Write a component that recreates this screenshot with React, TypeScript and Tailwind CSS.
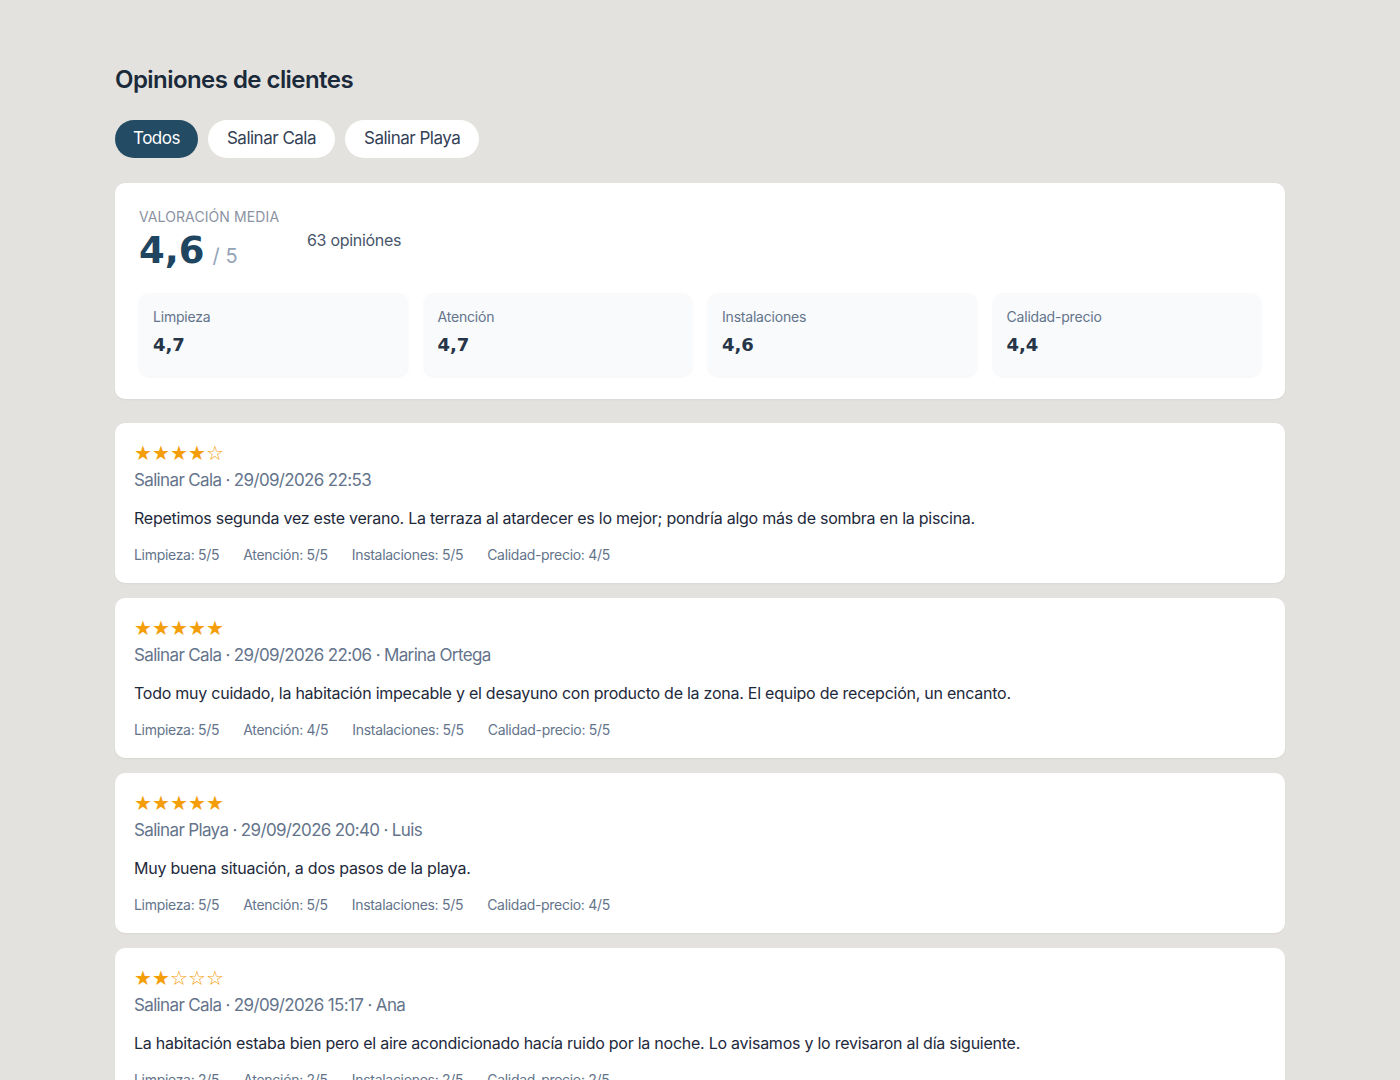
import React from "react";

const reviews = [
  {
    stars: 4,
    meta: "Salinar Cala · 29/09/2026 22:53",
    text: "Repetimos segunda vez este verano. La terraza al atardecer es lo mejor; pondría algo más de sombra en la piscina.",
    scores: [5, 5, 5, 4],
  },
  {
    stars: 5,
    meta: "Salinar Cala · 29/09/2026 22:06 · Marina Ortega",
    text: "Todo muy cuidado, la habitación impecable y el desayuno con producto de la zona. El equipo de recepción, un encanto.",
    scores: [5, 4, 5, 5],
  },
  {
    stars: 5,
    meta: "Salinar Playa · 29/09/2026 20:40 · Luis",
    text: "Muy buena situación, a dos pasos de la playa.",
    scores: [5, 5, 5, 4],
  },
  {
    stars: 2,
    meta: "Salinar Cala · 29/09/2026 15:17 · Ana",
    text: "La habitación estaba bien pero el aire acondicionado hacía ruido por la noche. Lo avisamos y lo revisaron al día siguiente.",
    scores: [2, 2, 2, 2],
  },
];

const categories = [
  { label: "Limpieza", value: "4,7" },
  { label: "Atención", value: "4,7" },
  { label: "Instalaciones", value: "4,6" },
  { label: "Calidad-precio", value: "4,4" },
];

const Stars = ({ n }: { n: number }) => (
  <div className="flex text-[#f59e0b] text-[20px] leading-[20px] font-['DejaVu_Sans',sans-serif]">
    {[0, 1, 2, 3, 4].map((i) => (
      <span key={i} className="w-[18px]">
        {i < n ? "★" : "☆"}
      </span>
    ))}
  </div>
);

const App = () => {
  const [tab, setTab] = React.useState("Todos");

  return (
    <div className="min-h-screen bg-[#e4e2de] font-['Inter',sans-serif] text-[#1e293b]">
      <div className="mx-auto w-[1170px] pt-[62px]">
        <h1 className="text-[24px] font-semibold tracking-[-0.55px] text-[#1b2a3b]">Opiniones de clientes</h1>

        {/* filters */}
        <div className="mt-[22px] flex gap-[10px]">
          {["Todos", "Salinar Cala", "Salinar Playa"].map((t) => (
            <button
              key={t}
              onClick={() => setTab(t)}
              className={
                tab === t
                  ? "h-[38px] rounded-full bg-[#234b64] px-[18px] text-[17px] tracking-[-0.5px] text-white"
                  : "h-[38px] rounded-full bg-white px-[19px] text-[17px] tracking-[-0.5px] text-[#334155]"
              }
            >
              {t}
            </button>
          ))}
        </div>

        {/* summary */}
        <div className="mt-[25px] rounded-[10px] bg-white px-6 pt-[25px] pb-[23px] shadow-[0_1px_2px_rgba(0,0,0,0.05)]">
          <div className="flex items-start">
            <div className="w-[168px]">
              <div className="text-[14px] uppercase leading-[18px] tracking-[0.1px] text-[#8b93a3]">Valoración media</div>
              <div className="flex items-baseline">
                <span className="font-['DejaVu_Sans',sans-serif] text-[37px] font-bold leading-[49px] text-[#1f4560]">4,6</span>
                <span className="ml-[8px] text-[20px] text-[#94a3b8]">/ 5</span>
              </div>
            </div>
            <div className="mt-[20px] text-[16px] tracking-[-0.3px] text-[#475569]">63 opiniónes</div>
          </div>

          <div className="mt-[18px] grid grid-cols-4 gap-4">
            {categories.map((c) => (
              <div
                key={c.label}
                className="h-[83px] rounded-[10px] bg-[#f8fafc] px-[14px] pt-[15px] shadow-[0_1px_3px_rgba(15,23,42,0.05)]"
              >
                <div className="text-[14px] leading-[18px] tracking-[-0.2px] text-[#64748b]">{c.label}</div>
                <div className="mt-[7px] font-['DejaVu_Sans',sans-serif] text-[18px] font-bold leading-[24px] text-[#263548]">
                  {c.value}
                </div>
              </div>
            ))}
          </div>
        </div>

        {/* reviews */}
        <div className="mt-[24px] flex flex-col gap-[15px]">
          {reviews.map((r, i) => (
            <div key={i} className="h-[160px] rounded-[10px] bg-white px-[19px] pt-[20px] shadow-[0_1px_2px_rgba(0,0,0,0.05)]">
              <Stars n={r.stars} />
              <div className="mt-[6px] text-[17px] leading-[22px] tracking-[-0.65px] text-[#64748b]">{r.meta}</div>
              <p className="mt-[16px] text-[16px] leading-[22px] tracking-[-0.25px] text-[#1e293b]">{r.text}</p>
              <div className="mt-[17px] flex gap-6 text-[14px] leading-[18px] tracking-[-0.3px] text-[#64748b]">
                <span>Limpieza: {r.scores[0]}/5</span>
                <span>Atención: {r.scores[1]}/5</span>
                <span>Instalaciones: {r.scores[2]}/5</span>
                <span>Calidad-precio: {r.scores[3]}/5</span>
              </div>
            </div>
          ))}
        </div>
      </div>
    </div>
  );
};

export default App;
